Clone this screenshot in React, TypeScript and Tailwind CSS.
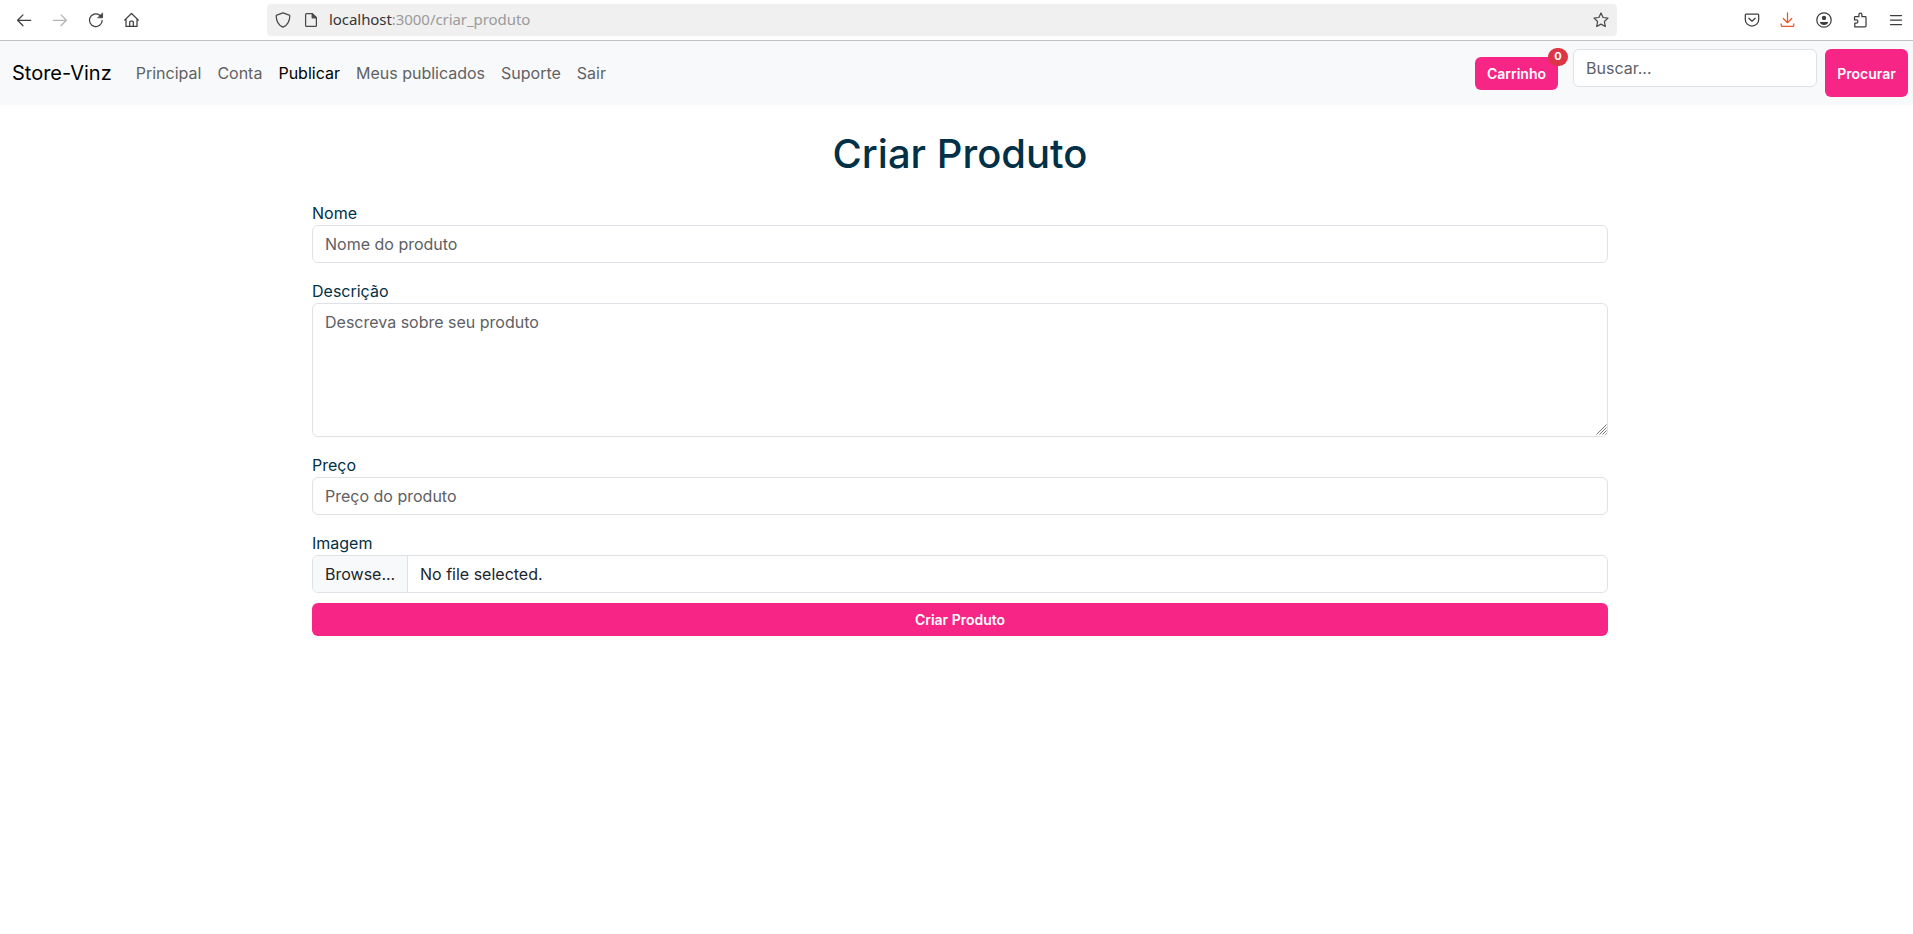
import React from "react";

type IconProps = { className?: string; children: React.ReactNode };

function Icon({ className = "", children }: IconProps) {
  return (
    <svg
      viewBox="0 0 16 16"
      className={`h-4 w-4 shrink-0 ${className}`}
      fill="none"
      stroke="currentColor"
      strokeWidth="1.25"
      strokeLinecap="round"
      strokeLinejoin="round"
      aria-hidden="true"
    >
      {children}
    </svg>
  );
}

function BrowserBar() {
  return (
    <div className="flex h-[41px] items-center border-b border-[#c2c2c2] bg-white text-[#3d3d3f]">
      <div className="flex w-[267px] gap-5 pl-4">
        <Icon>
          <path d="M1.8 8.3h13M7 2.9 1.6 8.3 7 13.7" />
        </Icon>
        <Icon className="text-[#b4b4b5]">
          <path d="M1.2 8.3h13M9 2.9l5.4 5.4L9 13.7" />
        </Icon>
        <Icon>
          <path d="M14.2 8.5A6.4 6.4 0 1 1 11.4 2.9l1.4 1.1" />
          <path d="M14.6 1.2v4.6h-4.6z" fill="currentColor" strokeWidth="0.7" />
        </Icon>
        <Icon>
          <path d="M.6 8.1 7.500 1.500l6.900 6.600M2 7v7.400h11V7M5.700 14.200V10.100a1 1 0 0 1 1-1h1.600a1 1 0 0 1 1 1v4.100" />
        </Icon>
      </div>
      <div className="flex h-8 w-[1350px] items-center rounded-[4px] bg-[#f0f0f0] pl-2 pr-2">
        <Icon className="text-[#4a4a4c]">
          <path d="M8 .8 14.3 3.2c.3 0 .5.4.5.7-.1 5.4-2.4 9-6.3 11a1 1 0 0 1-1 0C3.600 12.900 1.300 9.300 1.200 3.900c0-.3.2-.7.5-.8z" />
        </Icon>
        <Icon className="ml-3 text-[#4a4a4c]">
          <path d="M3.600 1.600h5.600l4.200 4.200v7.600a1 1 0 0 1-1 1H3.600a1 1 0 0 1-1-1V2.600a1 1 0 0 1 1-1z" />
          <path d="M9.200 1.600v4.200h4.200z" fill="currentColor" />
        </Icon>
        <span className="mb-0.5 ml-[10px] flex-1 whitespace-pre font-['Noto_Sans',sans-serif] text-[15px] leading-5 tracking-[-0.06px] text-[#9b9b9b]">
          <span className="text-[#363638]">localhost</span>:3000/criar_produto
        </span>
        <Icon className="text-[#4a4a4c]">
          <path d="m8 1 2.100 4.500 4.900.6-3.600 3.400.9 5L8 12.100l-4.300 2.400.9-5L1 6.100l4.900-.6z" />
        </Icon>
      </div>
      <div className="ml-auto flex gap-5 pr-[9px]">
        <Icon>
          <path d="M2.300 2.200h11.400a1 1 0 0 1 1 1v4.200a6.700 6.700 0 0 1-13.400 0V3.200a1 1 0 0 1 1-1z" />
          <path d="M4.800 6.200 8 9.200l3.200-3" />
        </Icon>
        <Icon className="text-[#e8572b]">
          <path d="M7.500.8v9.800M3.300 6.500l4.200 4.200 4.200-4.200M1.200 11.900v1.200a1.200 1.200 0 0 0 1.200 1.200h10.200a1.200 1.200 0 0 0 1.200-1.200v-1.200" />
        </Icon>
        <Icon>
          <circle cx="8" cy="8" r="7.200" />
          <circle cx="8" cy="5.900" r="2.200" fill="currentColor" stroke="none" />
          <path d="M3.900 9.900h8.200c0 1.800-2 3-4.100 3s-4.100-1.200-4.100-3z" fill="currentColor" stroke="none" />
        </Icon>
        <Icon>
          <path d="M2.800 14.900V11.100h1.500a1.600 1.600 0 0 0 0-3.200H2.500V5.500a.8.8 0 0 1 .8-.8h3.600V2.500a1.500 1.500 0 0 1 3 0v2.200h3.300a.8.8 0 0 1 .8.8v8.600a.8.8 0 0 1-.8.8z" />
        </Icon>
        <Icon>
          <path d="M2.500 3.500h11M2.500 8h11M2.500 12.500h11" />
        </Icon>
      </div>
    </div>
  );
}

const links = ["Principal", "Conta", "Publicar", "Meus publicados", "Suporte", "Sair"];

function Navbar() {
  return (
    <nav className="flex h-16 items-start bg-[#f8f9fa] py-2 pl-3 pr-[5px]">
      <a className="mr-4 self-center whitespace-nowrap text-[20px] leading-[30px] text-black">Store-Vinz</a>
      <ul className="flex self-center">
        {links.map((label) => (
          <li
            key={label}
            className={`whitespace-nowrap px-2 py-2 text-base ${label === "Publicar" ? "text-black" : "text-[#616263]"}`}
          >
            {label}
          </li>
        ))}
      </ul>
      <button className="relative ml-auto mr-[15px] h-[33px] w-[83px] self-center rounded-md bg-[#f72585] pt-0.5 text-sm font-semibold text-white">
        Carrinho
        <span className="absolute left-[73px] top-[-9px] flex h-[18px] w-5 items-center justify-center rounded-full bg-[#dc3545] text-[11px] font-bold leading-none">
          0
        </span>
      </button>
      <input
        placeholder="Buscar..."
        className="mr-2 h-[38px] w-[244px] rounded-md border border-[#dee2e6] bg-white px-3 text-base placeholder:text-[#5d6064]"
      />
      <button className="h-12 w-[83px] rounded-md bg-[#f72585] pt-0.5 text-sm font-semibold text-white">
        Procurar
      </button>
    </nav>
  );
}

const field =
  "block w-full rounded-md border border-[#dee2e6] bg-white px-3 text-base text-[#212529] placeholder:text-[#5d6064]";

export default function App() {
  return (
    <div className="min-h-[934px] bg-white font-['Inter','Liberation_Sans',sans-serif]">
      <BrowserBar />
      <Navbar />
      <main className="ml-[312px] w-[1296px] pt-[25px] text-[#023047]">
        <h1 className="mb-[23px] text-center text-[40px] font-medium leading-[48px]">Criar Produto</h1>
        <form>
          <div className="mb-4">
            <label className="block text-base">Nome</label>
            <input className={`${field} h-[38px]`} placeholder="Nome do produto" />
          </div>
          <div className="mb-4">
            <label className="block text-base">Descrição</label>
            <div className="relative">
              <textarea className={`${field} h-[134px] resize-none py-1.5`} placeholder="Descreva sobre seu produto" />
              <svg
                viewBox="0 0 11 11"
                className="absolute bottom-[2px] right-[1px] h-[11px] w-[11px]"
                stroke="#77777a"
                strokeWidth="1"
                aria-hidden="true"
              >
                <path d="M.5 10.500 10.500.5M3.500 10.500l7-7M6.500 10.500l4-4M9.500 10.500l1-1" />
              </svg>
            </div>
          </div>
          <div className="mb-4">
            <label className="block text-base">Preço</label>
            <input className={`${field} h-[38px]`} placeholder="Preço do produto" />
          </div>
          <label className="block text-base">Imagem</label>
          <div className="flex h-[38px] items-stretch overflow-hidden rounded-md border border-[#dee2e6] text-base leading-9 text-[#212529]">
            <span className="w-[95px] whitespace-nowrap border-r border-[#dee2e6] bg-[#f8f9fa] pl-3">Browse...</span>
            <span className="pl-3">No file selected.</span>
          </div>
          <button
            type="button"
            className="mt-[10px] block h-[33px] w-full rounded-md bg-[#f72585] pt-px text-sm font-semibold text-white"
          >
            Criar Produto
          </button>
        </form>
      </main>
    </div>
  );
}
